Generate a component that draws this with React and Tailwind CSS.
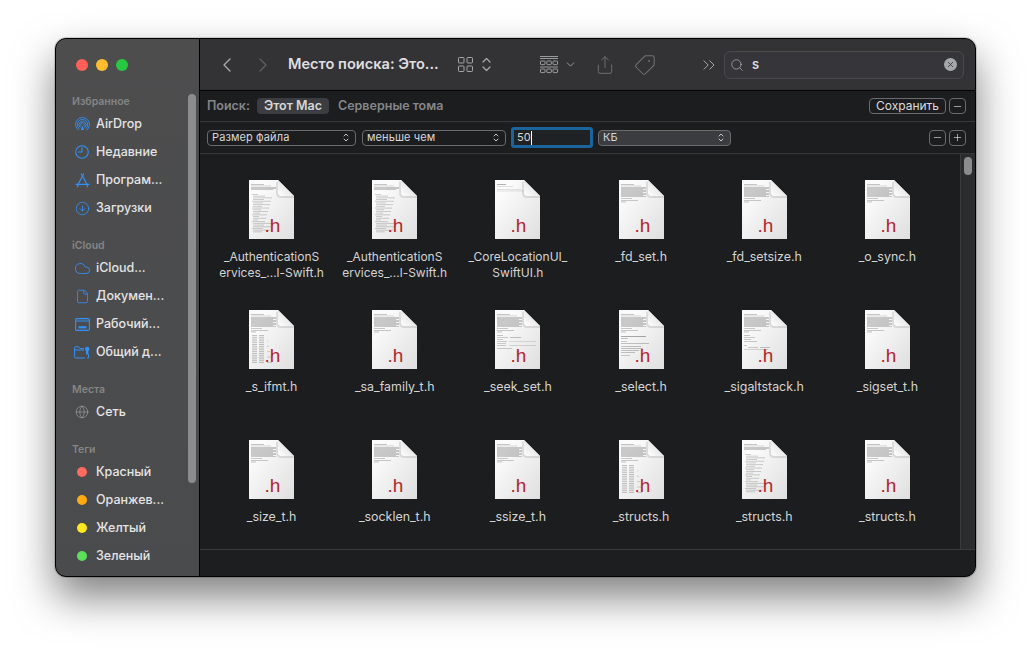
import { ChevronLeft, ChevronRight, ChevronDown, ChevronsRight, Search, Share, Tag, CircleArrowDown, Cloud, File, Globe, X, Minus, Plus } from "lucide-react";

const range = (from, to, step = 1) => {
  const out = [];
  for (let y = from; y <= to; y += step) out.push(y);
  return out;
};

// miniature text lines on the document previews: [y, x1, x2, opacity]
const headLines = [
  [4, 2, 15, 0.3],
  [5.5, 2, 22, 0.2],
  ...range(7, 16).map((y) => [y, 2, y % 3 === 0 ? 24 : 27, 0.28]),
  [18, 2, 13, 0.28],
  [20, 2, 19, 0.28],
  [21.5, 2, 7, 0.32],
];
const coreLines = [
  [4, 2, 11, 0.4],
  [6, 2, 18, 0.14],
  [9, 2, 26, 0.14],
  [10.5, 2, 29, 0.14],
];
const authLines = [
  ...headLines.slice(0, 5),
  ...range(14, 52, 1.7).map((y, i) => [y, 3 + (i % 4 === 0 ? 0 : 1), 9 + ((i * 7) % 15), 0.25]),
];
const tableLines = [
  ...headLines,
  ...range(25, 52, 1.8).flatMap((y, i) => [
    [y, 3, 8, 0.3],
    [y, 10, 15, 0.3],
    [y, 18, 18 + ((i * 5) % 7), i % 3 === 0 ? 0.22 : 0],
  ]),
];
const midLines = [
  ...headLines,
  [25, 2, 8, 0.3],
  [27, 2, 13, 0.26],
  [27, 15, 26, 0.3],
  [29, 2, 8, 0.26],
  [31, 2, 12, 0.26],
  [31, 14, 41, 0.16],
  [33, 2, 11, 0.26],
  [35, 2, 11, 0.26],
  [35, 14, 41, 0.18],
  [38, 2, 17, 0.26],
];
const selectLines = [
  ...headLines,
  [26, 2, 27, 0.45],
  [28, 2, 9, 0.3],
  [31, 2, 8, 0.26],
  [33, 2, 30, 0.3],
  [36, 2, 22, 0.3],
  [38, 2, 24, 0.3],
  [40, 2, 20, 0.3],
  [42, 2, 16, 0.3],
  [45, 2, 11, 0.26],
];
const smallLines = [
  ...headLines,
  [25, 2, 8, 0.3],
  [27, 2, 13, 0.26],
  [29, 2, 9, 0.26],
  [31, 2, 15, 0.26],
  [35, 2, 5, 0.26],
  [37, 6, 16, 0.26],
  [37, 18, 28, 0.3],
  [39, 2, 26, 0.2],
];

const files = [
  { lines: ["_AuthenticationS", "ervices_...l-Swift.h"], doc: authLines },
  { lines: ["_AuthenticationS", "ervices_...l-Swift.h"], doc: authLines },
  { lines: ["_CoreLocationUI_", "SwiftUI.h"], doc: coreLines },
  { lines: ["_fd_set.h"], doc: headLines },
  { lines: ["_fd_setsize.h"], doc: headLines },
  { lines: ["_o_sync.h"], doc: headLines },
  { lines: ["_s_ifmt.h"], doc: tableLines },
  { lines: ["_sa_family_t.h"], doc: headLines },
  { lines: ["_seek_set.h"], doc: midLines },
  { lines: ["_select.h"], doc: selectLines },
  { lines: ["_sigaltstack.h"], doc: smallLines },
  { lines: ["_sigset_t.h"], doc: headLines },
  { lines: ["_size_t.h"], doc: headLines },
  { lines: ["_socklen_t.h"], doc: headLines },
  { lines: ["_ssize_t.h"], doc: headLines },
  { lines: ["_structs.h"], doc: tableLines },
  { lines: ["_structs.h"], doc: authLines },
  { lines: ["_structs.h"], doc: headLines },
];

const FileIcon = ({ doc }) => (
  <svg width="45" height="59" viewBox="0 0 45 59" className="block">
    <defs>
      <linearGradient id="paper" x1="0" y1="0" x2="1" y2="1">
        <stop offset="0.2" stopColor="#fbfbfb" />
        <stop offset="1" stopColor="#dfdfdf" />
      </linearGradient>
      <linearGradient id="fold" x1="0" y1="1" x2="1" y2="0">
        <stop offset="0" stopColor="#ffffff" />
        <stop offset="1" stopColor="#d4d4d4" />
      </linearGradient>
    </defs>
    <path d="M0 0H29L45 16V59H0Z" fill="url(#paper)" />
    {doc.map(([y, x1, x2, o], i) => (
      <rect key={i} x={x1} y={y} width={x2 - x1} height="0.9" fill="#333" opacity={o} />
    ))}
    <path d="M29 12Q29 16 33 16H45L45 18H32Q27 18 27 12V1.5H29Z" fill="#000" opacity="0.1" />
    <path d="M29 0L45 16H33Q29 16 29 12Z" fill="url(#fold)" />
    <text x="23.5" y="52" textAnchor="middle" fontSize="19" fontFamily="'Liberation Sans', sans-serif" fill="#b3262b">.h</text>
  </svg>
);

const AirDropIcon = () => (
  <svg width="15" height="15" viewBox="0 0 15 15" fill="none" stroke="#3391f7" strokeWidth="0.9" strokeLinecap="round">
    <path d="M3.2 13.1A7 7 0 1 1 11.8 13.1" />
    <path d="M4.1 11.6A5.2 5.2 0 1 1 10.9 11.6" />
    <path d="M5 10.3A3.5 3.5 0 1 1 10 10.3" />
    <path d="M6 9A1.9 1.9 0 1 1 9 9" />
    <path d="M7.5 8.5L5.8 13H9.2Z" fill="#3391f7" stroke="none" />
  </svg>
);

const ClockIcon = () => (
  <svg width="14" height="14" viewBox="0 0 14 14" fill="none" stroke="#3391f7" strokeWidth="1.1" strokeLinecap="round" strokeLinejoin="round">
    <circle cx="7" cy="7" r="6.3" />
    <path d="M7 2.8V7H3.6" />
  </svg>
);

const AppsIcon = () => (
  <svg width="15" height="15" viewBox="0 0 15 15" fill="none" stroke="#3391f7" strokeWidth="1.2" strokeLinecap="round">
    <path d="M8.6 1L3.2 11" />
    <path d="M6.4 1L11.8 11" />
    <path d="M1 11.3H14" />
    <path d="M3.2 11.6L2.4 13.8" />
    <path d="M11.8 11.6L12.6 13.8" />
  </svg>
);

const DesktopIcon = () => (
  <svg width="15" height="13" viewBox="0 0 15 13" fill="none">
    <rect x="0.6" y="0.6" width="13.8" height="11.8" rx="1.2" stroke="#3391f7" strokeWidth="1.1" />
    <path d="M1 3H14" stroke="#3391f7" strokeWidth="1" />
    <rect x="3.5" y="8.2" width="8" height="2.2" fill="#3391f7" />
  </svg>
);

const SharedFolderIcon = () => (
  <svg width="16" height="13" viewBox="0 0 16 13" fill="none" stroke="#3391f7" strokeWidth="1">
    <path d="M11 12H1.8Q0.6 12 0.6 10.8V1.8Q0.6 0.8 1.6 0.8H4.6L6.2 2.6H10" />
    <path d="M0.6 4H10" />
    <path d="M14.6 8V12H13" />
    <circle cx="13.2" cy="3" r="2.2" fill="#3391f7" stroke="none" />
    <path d="M13.2 5V8.5" strokeWidth="2.4" />
  </svg>
);

const blueIcon = "text-[#3391f7]";

const sections = [
  {
    title: "Избранное",
    items: [
      { label: "AirDrop", icon: <AirDropIcon /> },
      { label: "Недавние", icon: <ClockIcon /> },
      { label: "Програм...", icon: <AppsIcon /> },
      { label: "Загрузки", icon: <CircleArrowDown size={15} strokeWidth={1.3} className={blueIcon} /> },
    ],
  },
  {
    title: "iCloud",
    items: [
      { label: "iCloud...", icon: <Cloud size={17} strokeWidth={1.2} className={blueIcon} /> },
      { label: "Докумен...", icon: <File size={15} strokeWidth={1.3} className={blueIcon} /> },
      { label: "Рабочий...", icon: <DesktopIcon /> },
      { label: "Общий д...", icon: <SharedFolderIcon /> },
    ],
  },
  {
    title: "Места",
    items: [{ label: "Сеть", icon: <Globe size={14} strokeWidth={1.1} className="text-[#a2a3a4]" /> }],
  },
  {
    title: "Теги",
    items: [
      { label: "Красный", icon: <div className="w-[10px] h-[10px] rounded-full bg-[#ff6b60]" /> },
      { label: "Оранжев...", icon: <div className="w-[10px] h-[10px] rounded-full bg-[#ffab14]" /> },
      { label: "Желтый", icon: <div className="w-[10px] h-[10px] rounded-full bg-[#ffe81c]" /> },
      { label: "Зеленый", icon: <div className="w-[10px] h-[10px] rounded-full bg-[#5ae05a]" /> },
    ],
  },
];

const Sidebar = () => (
  <aside className="relative w-[143px] shrink-0 h-full overflow-hidden rounded-l-[10px] bg-gradient-to-b from-[#4d4d4e] to-[#4a4b4d] pt-[20px] pl-[16px]">
    <div className="flex gap-[8px] h-[12px] pl-[4px]">
      <div className="w-[12px] h-[12px] rounded-full bg-[#fe5f57]" />
      <div className="w-[12px] h-[12px] rounded-full bg-[#febc2e]" />
      <div className="w-[12px] h-[12px] rounded-full bg-[#28c840]" />
    </div>
    <div className="mt-[23px] flex flex-col gap-[16px]">
      {sections.map((s) => (
        <section key={s.title}>
          <div className="h-[16px] leading-[16px] text-[10.5px] font-semibold text-[#848586]">{s.title}</div>
          {s.items.map((it) => (
            <div key={it.label} className="flex items-center h-[28px]">
              <div className="w-[20px] flex justify-center shrink-0">{it.icon}</div>
              <span className="ml-[4px] text-[12.5px] font-medium text-[#e4e4e5] whitespace-nowrap">{it.label}</span>
            </div>
          ))}
        </section>
      ))}
    </div>
    <div className="absolute left-[132px] top-[55px] w-[8px] h-[389px] rounded-full bg-[#8b8c8d]" />
  </aside>
);

const GridIcon = () => (
  <svg width="15" height="15" viewBox="0 0 15 15" fill="none" stroke="#a6a7a9" strokeWidth="1">
    <rect x="0.5" y="0.5" width="5.5" height="5.5" rx="0.8" />
    <rect x="9" y="0.5" width="5.5" height="5.5" rx="0.8" />
    <rect x="0.5" y="9" width="5.5" height="5.5" rx="0.8" />
    <rect x="9" y="9" width="5.5" height="5.5" rx="0.8" />
  </svg>
);

const UpDownIcon = () => (
  <svg width="9" height="15" viewBox="0 0 9 15" fill="none" stroke="#a6a7a9" strokeWidth="1.3" strokeLinecap="round" strokeLinejoin="round">
    <path d="M1 5L4.5 1.5L8 5" />
    <path d="M1 10L4.5 13.5L8 10" />
  </svg>
);

const GroupIcon = () => (
  <svg width="18" height="18" viewBox="0 0 18 18" fill="none" stroke="#a6a7a9" strokeWidth="0.9">
    <path d="M0 0.5H18" />
    <path d="M0 2.5H18" />
    {[0.5, 6.8, 13].map((x) => (
      <g key={x}>
        <rect x={x} y="5" width="4.5" height="3.6" rx="0.6" />
        <rect x={x} y="13" width="4.5" height="3.6" rx="0.6" />
      </g>
    ))}
    <path d="M0 11H18" />
  </svg>
);

const Toolbar = () => (
  <header className="flex items-center h-[52px] shrink-0 bg-[#333336] rounded-tr-[10px] border-b border-black">
    <ChevronLeft size={24} strokeWidth={1.4} className="ml-[15px] text-[#a9aaab]" />
    <ChevronRight size={24} strokeWidth={1.4} className="ml-[12px] text-[#5e5f61]" />
    <span className="ml-[13px] w-[160px] text-[14.6px] font-semibold text-[#dfdfe0] whitespace-nowrap">Место поиска: Это...</span>
    <div className="ml-[10px]"><GridIcon /></div>
    <div className="ml-[9px]"><UpDownIcon /></div>
    <div className="ml-[49px]"><GroupIcon /></div>
    <ChevronDown size={13} strokeWidth={1.6} className="ml-[6px] text-[#a6a7a9]" />
    <Share size={20} strokeWidth={1.1} className="ml-[18px] text-[#727375]" />
    <Tag size={22} strokeWidth={1.1} className="ml-[19px] scale-x-[-1] text-[#727375]" />
    <ChevronsRight size={20} strokeWidth={1.2} className="ml-[43px] text-[#a6a7a9]" />
    <div className="ml-[5px] flex items-center w-[240px] h-[28px] rounded-[6px] border border-[#48494c] bg-[#36363a]">
      <Search size={14} strokeWidth={1.4} className="ml-[5px] text-[#a6a7a9]" />
      <span className="ml-[8px] text-[13px] font-semibold text-[#dcdcdd]">s</span>
      <div className="ml-auto mr-[6px] flex items-center justify-center w-[13px] h-[13px] rounded-full bg-[#a6a7a9]">
        <X size={9} strokeWidth={2.2} className="text-[#36363a]" />
      </div>
    </div>
  </header>
);

const SmallArrows = () => (
  <svg width="6" height="9" viewBox="0 0 6 9" fill="none" stroke="#c4c5c6" strokeWidth="1" strokeLinecap="round" strokeLinejoin="round">
    <path d="M1 3L3 1L5 3" />
    <path d="M1 6L3 8L5 6" />
  </svg>
);

const Select = ({ className, children }) => (
  <div className={`flex items-center justify-between h-[16px] pl-[4px] pr-[6px] rounded-[4px] border border-[#6a6b6d] text-[11px] text-[#d8d8d9] tracking-[0.1px] ${className}`}>
    <span>{children}</span>
    <SmallArrows />
  </div>
);

const SquareButton = ({ children }) => (
  <div className="flex items-center justify-center w-[17px] h-[16px] rounded-[4px] border border-[#6a6b6d] text-[#e4e4e5]">{children}</div>
);

const SearchBar = () => (
  <div className="flex items-center h-[31px] shrink-0 pl-[7px] pr-[9px] border-b border-[#36383a] text-[12.5px] font-semibold">
    <span className="text-[#85868a]">Поиск:</span>
    <div className="ml-[7px] flex items-center justify-center w-[72px] h-[16px] rounded-[4px] bg-[#3b3d40] text-[#d6d6d7]">Этот Мас</div>
    <span className="ml-[9px] text-[#85868a]">Серверные тома</span>
    <div className="ml-auto flex items-center justify-center w-[77px] h-[16px] rounded-[4px] border border-[#6a6b6d] text-[12px] font-normal text-[#dcdcdd]">Сохранить</div>
    <div className="ml-[3px]"><SquareButton><Minus size={11} strokeWidth={1.4} /></SquareButton></div>
  </div>
);

const CriteriaBar = () => (
  <div className="flex items-center h-[32px] shrink-0 pl-[7px] pr-[9px] border-b border-[#36383a]">
    <Select className="w-[149px]">Размер файла</Select>
    <Select className="w-[144px] ml-[6px]">меньше чем</Select>
    <div className="ml-[5px] flex items-center w-[82px] h-[21px] rounded-[3px] border-[3px] border-[#1b659c] bg-[#1f2224] pl-[3px] text-[11px] text-[#d8d8d9]">
      <span>50</span>
      <div className="w-px h-[14px] bg-white" />
    </div>
    <Select className="w-[133px] ml-[5px] bg-[#3b3c3f]">КБ</Select>
    <div className="ml-auto flex gap-[3px]">
      <SquareButton><Minus size={11} strokeWidth={1.4} /></SquareButton>
      <SquareButton><Plus size={11} strokeWidth={1.4} /></SquareButton>
    </div>
  </div>
);

const FileGrid = () => (
  <div className="flex flex-1 min-h-0 overflow-hidden">
    <div className="flex-1 pt-[26px] pl-[10px]">
      <div className="grid grid-cols-6 w-[739px] auto-rows-[130px]">
        {files.map((f, i) => (
          <div key={i} className="flex flex-col items-center">
            <FileIcon doc={f.doc} />
            <div className={`mt-[10px] text-center leading-[16px] text-[#d4d4d5] whitespace-nowrap ${f.lines.length > 1 ? "text-[12px]" : "text-[12.4px]"}`}>
              {f.lines.map((l) => (
                <div key={l}>{l}</div>
              ))}
            </div>
          </div>
        ))}
      </div>
    </div>
    <div className="w-[15px] shrink-0 border-l border-[#3a3b3d] bg-[#2b2c2e] pt-[3px] pl-[3px]">
      <div className="w-[8px] h-[18px] rounded-full bg-[#8b8c8d]" />
    </div>
  </div>
);

export default function App() {
  return (
    <div className="w-[1032px] h-[651px] overflow-hidden bg-white pt-[38px] pl-[55px] font-['Inter',sans-serif]">
      <div className="flex w-[921px] h-[539px] rounded-[11px] border border-black bg-[#1c1d1f] shadow-[0_0_0_1px_rgba(0,0,0,0.15),0_20px_42px_rgba(0,0,0,0.5)]">
        <Sidebar />
        <main className="flex flex-col flex-1 min-w-0 border-l border-black">
          <Toolbar />
          <SearchBar />
          <CriteriaBar />
          <FileGrid />
          <footer className="h-[27px] shrink-0 rounded-br-[10px] border-t border-[#3a3b3d] bg-[#1c1e20]" />
        </main>
      </div>
    </div>
  );
}
